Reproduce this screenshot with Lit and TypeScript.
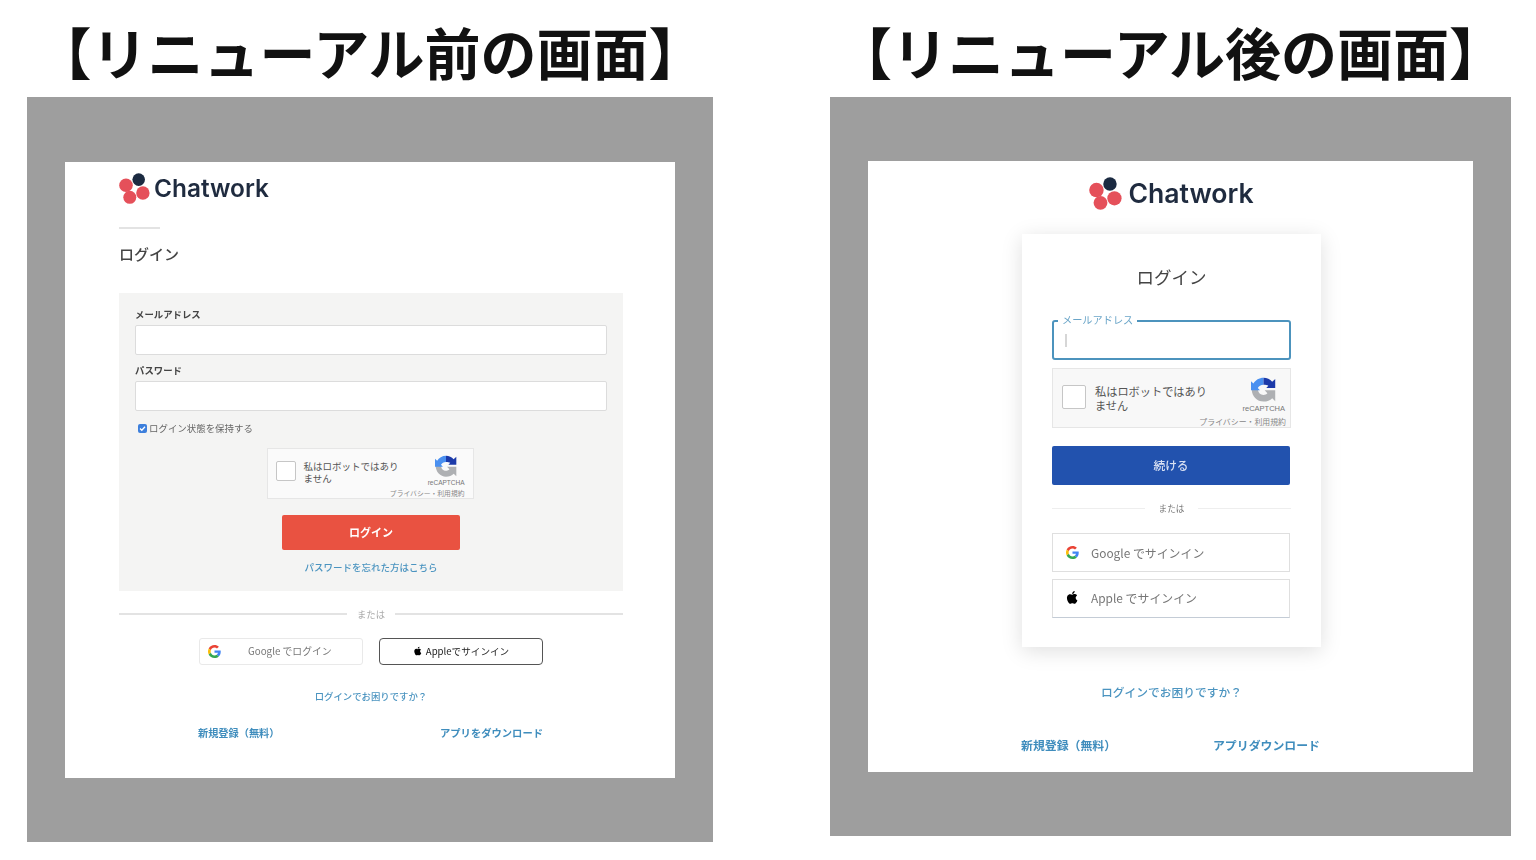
import { LitElement, html, css, svg } from "lit";
import { customElement } from "lit/decorators.js";

const petals = svg`
  <circle cx="19.700" cy="6.600" r="6.300" fill="#1b2a41"/>
  <circle cx="7" cy="12.300" r="6.800" fill="#e5505a"/>
  <circle cx="23.900" cy="20" r="6.700" fill="#e5505a"/>
  <circle cx="10.800" cy="24.300" r="6.500" fill="#e5505a"/>`;

const logo = () => html`<div class="logo">
  <svg class="mark" viewBox="0 0 31 31">${petals}</svg><span class="word">Chatwork</span>
</div>`;

const google = html`<svg class="gi" viewBox="0 0 48 48">
  <path fill="#EA4335" d="M24 9.5c3.5 0 6.7 1.2 9.2 3.6l6.9-6.9C35.9 2.4 30.5 0 24 0 14.6 0 6.5 5.4 2.6 13.2l8 6.2C12.5 13.7 17.800 9.5 24 9.500z"/>
  <path fill="#4285F4" d="M47 24.500c0-1.600-.1-3.100-.4-4.500H24v9h12.900c-.6 3-2.200 5.500-4.700 7.200l7.700 6c4.500-4.200 7.100-10.300 7.100-17.700z"/>
  <path fill="#FBBC05" d="M10.500 28.600C10 27.200 9.800 25.600 9.800 24s.3-3.200.8-4.600l-8-6.200C1 16.500 0 20.100 0 24s1 7.500 2.600 10.800l7.900-6.200z"/>
  <path fill="#34A853" d="M24 48c6.500 0 11.900-2.100 15.900-5.800l-7.700-6c-2.200 1.500-5 2.300-8.200 2.300-6.200 0-11.500-4.200-13.400-9.900l-8 6.200C6.500 42.600 14.600 48 24 48z"/>
</svg>`;

const apple = html`<svg class="ai" viewBox="0 0 24 24"><path fill="#000" d="M17.05 12.54c-.03-2.6 2.120-3.850 2.220-3.910-1.210-1.770-3.090-2.010-3.760-2.040-1.600-.16-3.120.94-3.930.94-.81 0-2.060-.92-3.390-.89-1.740.03-3.350 1.010-4.250 2.570-1.810 3.140-.46 7.800 1.300 10.350.86 1.250 1.890 2.650 3.240 2.600 1.300-.05 1.790-.84 3.360-.84s2.010.84 3.390.81c1.400-.02 2.280-1.270 3.140-2.530.99-1.450 1.400-2.850 1.420-2.920-.03-.01-2.720-1.040-2.740-4.140zM14.470 4.900c.72-.87 1.200-2.080 1.070-3.280-1.030.04-2.280.69-3.020 1.550-.66.770-1.240 2-1.090 3.180 1.150.09 2.320-.58 3.040-1.450z"/></svg>`;

const recap = (cls: string) => html`<div class="rc ${cls}">
  <span class="rc-check"></span>
  <span class="rc-text">私はロボットではありません</span>
  <div class="rc-brand">
    <svg class="rc-icon" viewBox="0 0 32 32">
      <path fill="#aeb0b3" d="M1 16h8c0 3.900 3.100 7 7 7 2 0 3.800-.8 5-2.200L17.500 17H31v14l-3.800-3.800C24.500 30 20.500 31.500 16 31.500 7.700 31.500 1 24.300 1 16z"/>
      <path fill="#4a90f0" d="M16 1C10.500 1 5.700 4 3.100 8.400L0 5.500V17h11.500l-2.800-2.800C10 11.800 12.500 10 16 10z"/>
      <path fill="#1c3aa9" d="M16 1c4.400 0 8.400 1.900 11.100 5L31 2.500V14H19.500l2.700-2.700C20.800 10.500 18.500 10 16 10z"/>
    </svg>
    <span class="rc-name">reCAPTCHA</span>
  </div>
  <span class="rc-terms">プライバシー・利用規約</span>
</div>`;

@customElement("app-root")
export class AppRoot extends LitElement {
  static styles = css`
    :host {
      display: block;
      width: 1536px;
      height: 860px;
      overflow: hidden;
      background: #fff;
      font-family: "Noto Sans CJK JP", "Liberation Sans", sans-serif;
    }
    .page { display: flex; align-items: flex-start; padding-left: 27px; gap: 117px; filter: blur(0.75px); }
    .col { display: flex; flex-direction: column; }
    .before { width: 686px; }
    .after { width: 681px; }
    h1 {
      margin: 0;
      height: 97px;
      font-size: 56px;
      line-height: 102px;
      font-weight: 700;
      color: #111;
      text-align: center;
      white-space: nowrap;
    }
    .frame { background: #9e9e9e; display: flex; }
    .before .frame { height: 745px; padding: 65px 38px 0; box-sizing: border-box; }
    .after .frame { height: 739px; padding: 64px 38px 0; box-sizing: border-box; }
    .shot { background: #fff; display: flex; flex-direction: column; width: 100%; }
    .before .shot { height: 616px; padding: 10px 52px 0 54px; box-sizing: border-box; }
    .after .shot { height: 611px; padding: 16px 0 0 2px; box-sizing: border-box; align-items: center; }

    .logo { display: flex; align-items: center; height: 33px; }
    .mark { width: 31px; height: 31px; display: block; }
    .word { font-family: Inter, sans-serif; font-weight: 600; color: #1f2b3f; margin-left: 4px; font-size: 24.400px; line-height: 33px; }
    .after .mark { width: 33px; height: 33px; }
    .after .word { font-size: 26.600px; margin-left: 6px; }

    .rule { width: 41px; height: 2px; background: #e3e3e3; margin-top: 22px; }
    .title { margin: 15px 0 0; font-size: 15px; line-height: 20px; font-weight: 500; color: #444; }
    .form { margin-top: 29px; height: 298px; box-sizing: border-box; padding: 14px 16px 0; background: #f4f4f3; display: flex; flex-direction: column; }
    .lbl { font-size: 9.400px; line-height: 14px; font-weight: 700; color: #444; }
    .lbl + .inp { margin-top: 4px; }
    .inp { height: 30px; box-sizing: border-box; background: #fff; border: 1px solid #dcdcdc; border-radius: 2px; }
    .inp + .lbl { margin-top: 8px; }
    .keep { display: flex; align-items: center; gap: 2px; margin-top: 10px; padding-left: 3px; height: 14px; font-size: 9.450px; color: #666; }
    .box { width: 9px; height: 9px; border-radius: 2px; background: #3d7fdc; display: flex; }
    .box svg { width: 9px; height: 9px; }
    .form .rc { align-self: center; margin: 13px 2px 0 0; }
    .login { align-self: center; margin-top: 16px; width: 178px; height: 35px; box-sizing: border-box; padding-bottom: 2px; border-radius: 2px; background: #e95241; color: #fff; font-size: 11px; font-weight: 700; display: flex; align-items: center; justify-content: center; }
    .forgot { align-self: center; margin-top: 10px; font-size: 9.500px; line-height: 14px; font-weight: 500; color: #4b94c0; }

    .or { display: flex; align-items: center; height: 14px; font-size: 9.300px; color: #aaa; gap: 10px; }
    .or i { flex: 1; height: 1.500px; background: #e3e3e3; }
    .before .or { margin-top: 16px; }
    .socials { display: flex; justify-content: center; gap: 16px; margin-top: 17px; }
    .sbtn { width: 164px; height: 27px; box-sizing: border-box; padding-bottom: 1px; border-radius: 3px; display: flex; align-items: center; font-size: 9.800px; }
    .sbtn.g { border: 1px solid #e9e9e9; color: #777; padding-left: 8px; }
    .sbtn.g span { margin-left: 27px; }
    .sbtn.a { border: 1px solid #555; border-radius: 4px; color: #222; justify-content: center; gap: 3px; font-size: 9.600px; }
    .gi { width: 13px; height: 13px; display: block; flex: none; }
    .ai { width: 10px; height: 10px; display: block; flex: none; }
    .help { text-align: center; margin-top: 24px; font-size: 9.400px; line-height: 14px; font-weight: 500; color: #4b94c0; }
    .foot { display: flex; justify-content: space-between; margin-top: 23px; padding: 0 80px 0 79px; font-size: 10.200px; line-height: 14px; font-weight: 700; color: #3f8dbd; text-spacing-trim: space-all; }
    .foot .dl { font-size: 10.300px; }

    .card { width: 299px; height: 413px; margin-top: 24px; box-sizing: border-box; padding: 31px 30px 0; background: #fff; box-shadow: 0 4px 20px rgba(0,0,0,.13); display: flex; flex-direction: column; }
    .card .title { margin: 0; text-align: center; font-size: 17.500px; line-height: 24px; font-weight: 400; color: #444; }
    .mail { position: relative; margin-top: 31px; height: 40px; box-sizing: border-box; border: 2px solid #4c93bd; border-radius: 3px; display: flex; align-items: center; padding-left: 11px; }
    .mail b { position: absolute; top: -9px; left: 4px; padding: 0 4px; background: #fff; font-size: 10.200px; line-height: 13px; font-weight: 400; color: #6aa5c8; }
    .caret { width: 2px; height: 13px; background: #d6d6d6; }
    .card .rc { margin-top: 8px; }
    .go { margin: 18px 1px 0 0; height: 39px; box-sizing: border-box; padding-bottom: 2px; border-radius: 2px; background: #2252ae; color: #d8e0f2; font-size: 11.700px; font-weight: 500; display: flex; align-items: center; justify-content: center; }
    .card .or { margin-top: 16px; font-size: 8.700px; color: #777; gap: 13px; }
    .card .or i { height: 1px; background: #eee; }
    .wbtn { height: 39px; box-sizing: border-box; border: 1px solid #dfdfdf; display: flex; align-items: center; padding: 0 0 1px 13px; gap: 12px; font-size: 11.900px; color: #777; margin: 7px 1px 0 0; }
    .wbtn.first { margin-top: 18px; }
    .wbtn.apple { border-bottom-color: #c4ccd6; padding: 0 0 3px 12px; gap: 11px; }
    .wbtn .ai { width: 15px; height: 15px; }
    .after .help { margin-top: 38px; font-size: 11.750px; }
    .foot2 { display: flex; justify-content: space-between; width: 299px; margin: 39px 0 0 -2px; font-size: 11.900px; line-height: 14px; font-weight: 700; color: #3f8dbd; text-spacing-trim: space-all; }

    .rc { position: relative; box-sizing: border-box; display: flex; align-items: flex-start; background: #fafafa; border: 1px solid #e6e6e6; color: #555; }
    .rc-check { flex: none; background: #fff; border: 1.500px solid #c6c6c6; border-radius: 2px; box-sizing: border-box; }
    .rc-text { display: block; }
    .rc-brand { position: absolute; display: flex; flex-direction: column; align-items: center; }
    .rc-icon { display: block; }
    .rc-name { color: #777; line-height: 1; font-family: "Liberation Sans", sans-serif; }
    .rc-terms { position: absolute; color: #888; line-height: 1; white-space: nowrap; }

    .rc.s { width: 207px; height: 51px; padding: 12px 0 0 8px; }
    .rc.s .rc-check { width: 20px; height: 20px; }
    .rc.s .rc-text { width: 98px; margin-left: 8px; margin-top: -1px; font-size: 9.500px; line-height: 12px; }
    .rc.s .rc-brand { right: 8px; top: 6px; gap: 3px; }
    .rc.s .rc-icon { width: 22px; height: 22px; }
    .rc.s .rc-name { font-size: 6.500px; }
    .rc.s .rc-terms { right: 8px; bottom: 1px; font-size: 6.800px; }

    .rc.l { width: 239px; height: 60px; padding: 16px 0 0 9px; background: #f8f8f8; }
    .rc.l .rc-check { width: 24px; height: 24px; }
    .rc.l .rc-text { width: 114px; margin-left: 9px; margin-top: -1px; font-size: 11.200px; line-height: 14px; }
    .rc.l .rc-brand { right: 5px; top: 8px; gap: 3px; }
    .rc.l .rc-icon { width: 25px; height: 25px; }
    .rc.l .rc-name { font-size: 7.500px; }
    .rc.l .rc-terms { right: 4px; bottom: 1px; font-size: 7.900px; }
  `;

  render() {
    return html`<div class="page">
      <section class="col before">
        <h1>【リニューアル前の画面】</h1>
        <div class="frame"><div class="shot">
          ${logo()}
          <div class="rule"></div>
          <h2 class="title">ログイン</h2>
          <div class="form">
            <div class="lbl">メールアドレス</div>
            <div class="inp"></div>
            <div class="lbl">パスワード</div>
            <div class="inp"></div>
            <div class="keep">
              <span class="box"><svg viewBox="0 0 9 9"><path d="M2 4.500l1.800 1.800L7 2.800" fill="none" stroke="#fff" stroke-width="1.300"/></svg></span>
              ログイン状態を保持する
            </div>
            ${recap("s")}
            <div class="login">ログイン</div>
            <div class="forgot">パスワードを忘れた方はこちら</div>
          </div>
          <div class="or"><i></i>または<i></i></div>
          <div class="socials">
            <div class="sbtn g">${google}<span>Google でログイン</span></div>
            <div class="sbtn a">${apple}<span>Appleでサインイン</span></div>
          </div>
          <div class="help">ログインでお困りですか？</div>
          <div class="foot"><span>新規登録（無料）</span><span class="dl">アプリをダウンロード</span></div>
        </div></div>
      </section>
      <section class="col after">
        <h1>【リニューアル後の画面】</h1>
        <div class="frame"><div class="shot">
          ${logo()}
          <div class="card">
            <h2 class="title">ログイン</h2>
            <div class="mail"><b>メールアドレス</b><span class="caret"></span></div>
            ${recap("l")}
            <div class="go">続ける</div>
            <div class="or"><i></i>または<i></i></div>
            <div class="wbtn first">${google}<span>Google でサインイン</span></div>
            <div class="wbtn apple">${apple}<span>Apple でサインイン</span></div>
          </div>
          <div class="help">ログインでお困りですか？</div>
          <div class="foot2"><span>新規登録（無料）</span><span class="dl">アプリダウンロード</span></div>
        </div></div>
      </section>
    </div>`;
  }
}
